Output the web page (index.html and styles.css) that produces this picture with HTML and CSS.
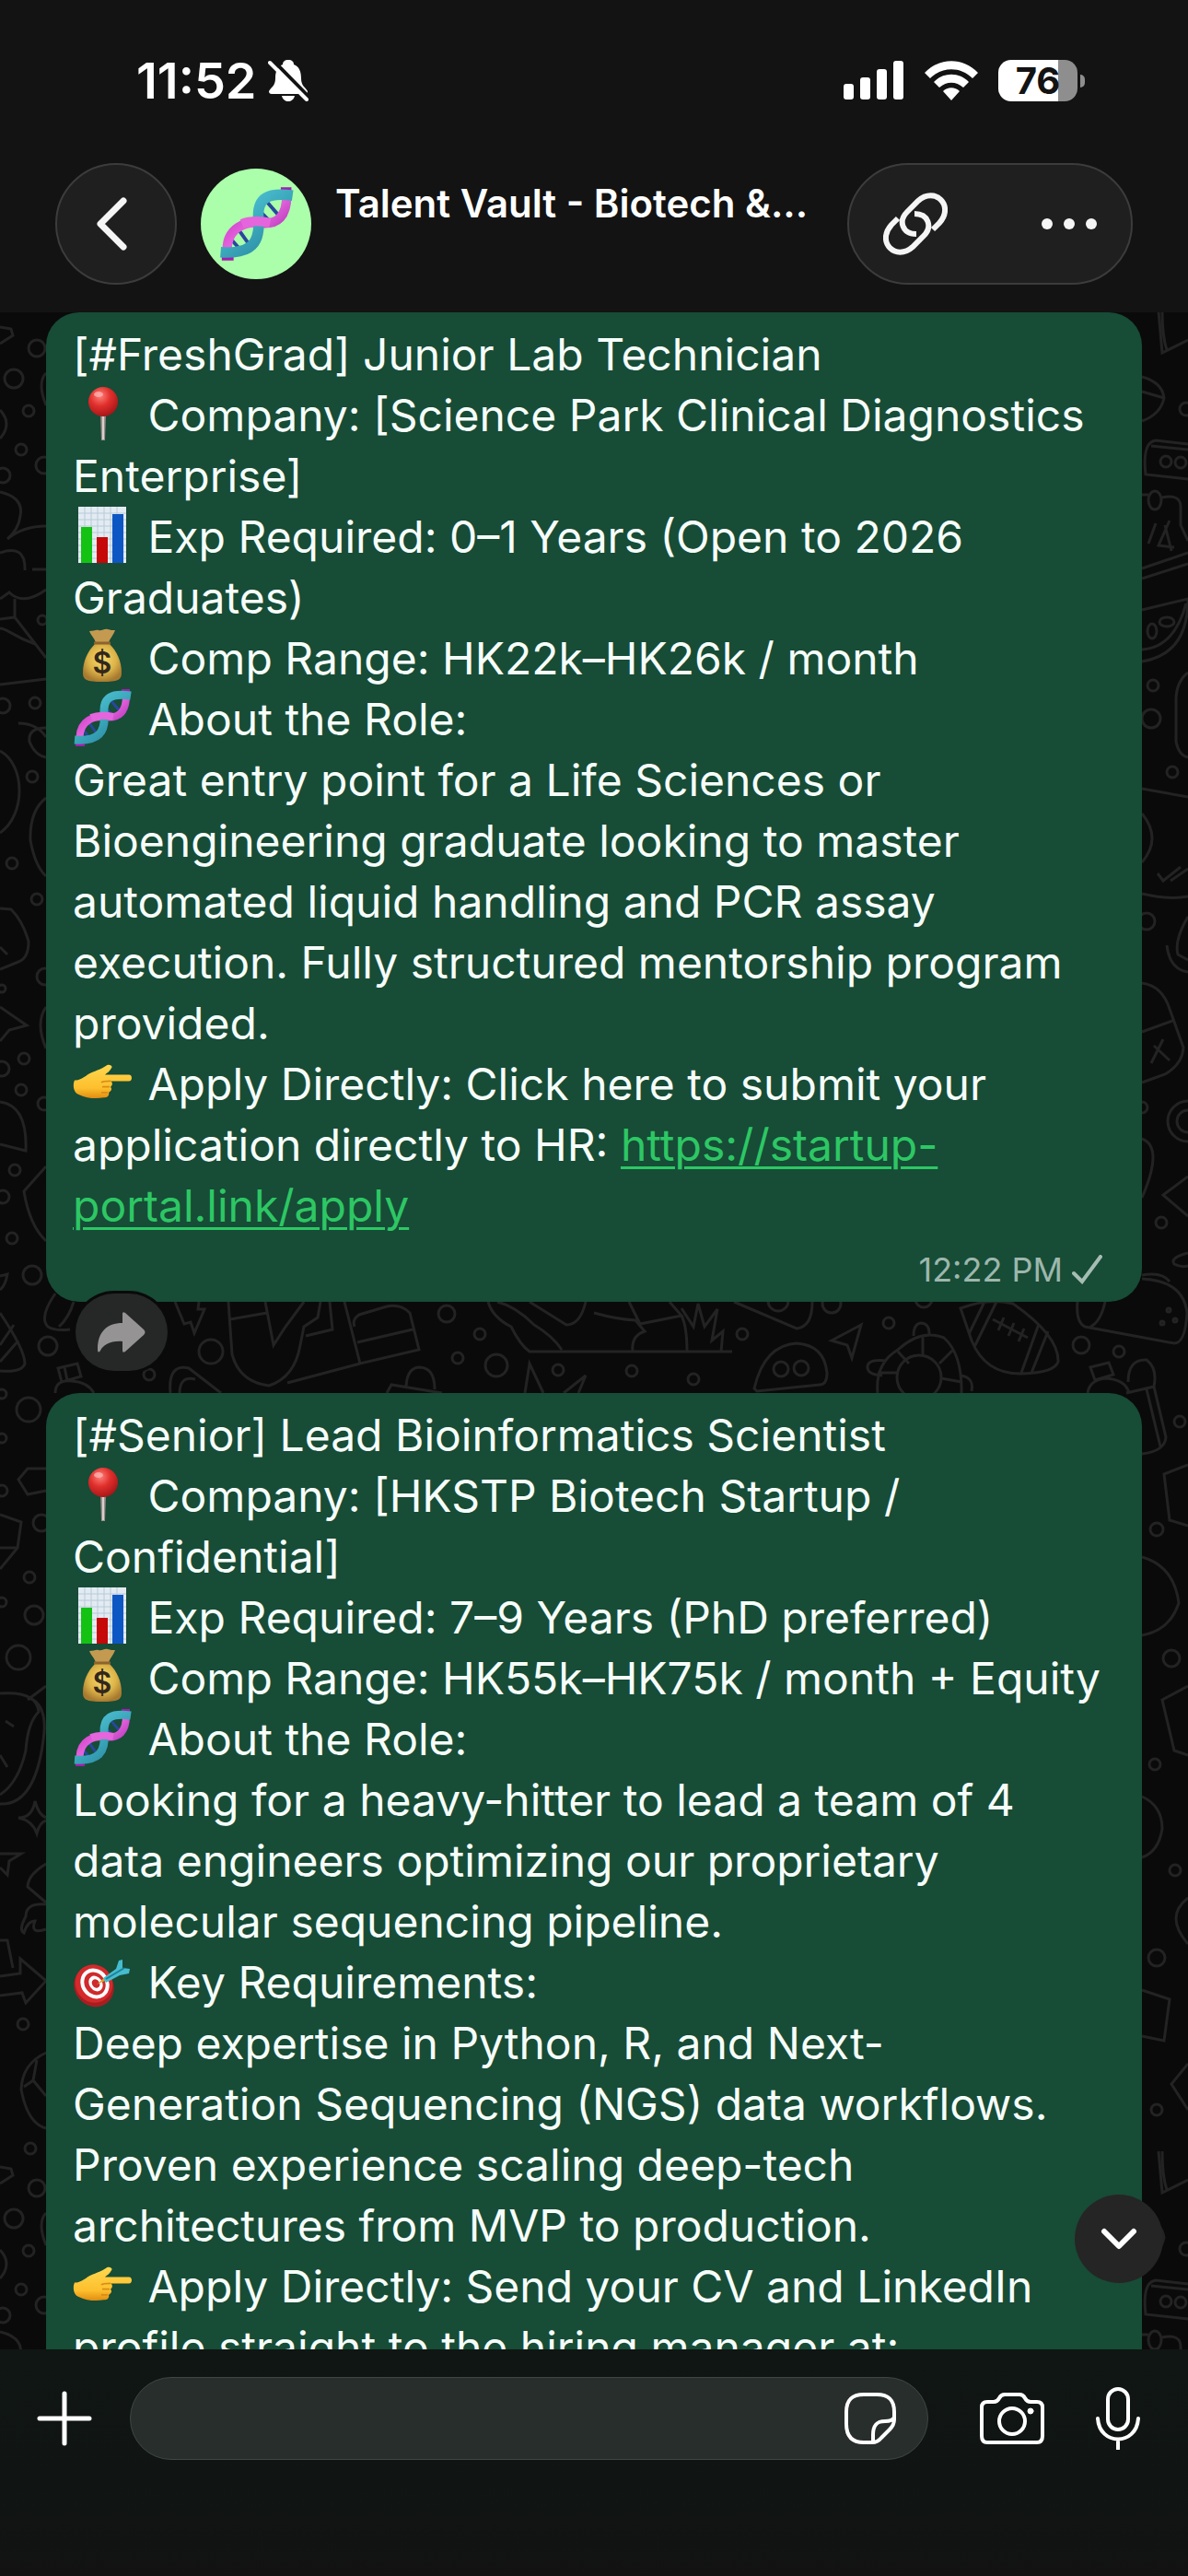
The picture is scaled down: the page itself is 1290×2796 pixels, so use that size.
FILE: index.html
```html
<!DOCTYPE html>
<html lang="en">
  <head>
    <meta charset="UTF-8" />
    <meta name="viewport" content="width=device-width, initial-scale=1.0" />
    <title>Talent Vault - Biotech</title>
    <link rel="stylesheet" href="styles.css">
  </head>
  <body>
    <!-- shared emoji drawings -->
    <svg width="0" height="0" class="defs" aria-hidden="true">
      <defs>
        <linearGradient id="teal" x1="0" y1="0" x2="1" y2="1">
          <stop offset="0" stop-color="#55d0de" />
          <stop offset="1" stop-color="#237f98" />
        </linearGradient>
        <linearGradient id="pink" x1="0" y1="0" x2="1" y2="1">
          <stop offset="0" stop-color="#c21ec0" />
          <stop offset="0.5" stop-color="#e565dc" />
          <stop offset="1" stop-color="#9a1ba8" />
        </linearGradient>
        <radialGradient id="red" cx="0.4" cy="0.3" r="0.7">
          <stop offset="0" stop-color="#ff8078" />
          <stop offset="0.5" stop-color="#e02f2c" />
          <stop offset="1" stop-color="#a91718" />
        </radialGradient>
        <radialGradient id="gold" cx="0.5" cy="0.4" r="0.6">
          <stop offset="0" stop-color="#f7dc6c" />
          <stop offset="0.6" stop-color="#dcb348" />
          <stop offset="1" stop-color="#a87a30" />
        </radialGradient>
        <linearGradient id="skin" x1="0" y1="0" x2="0" y2="1">
          <stop offset="0" stop-color="#ffd84f" />
          <stop offset="0.7" stop-color="#fdbf2d" />
          <stop offset="1" stop-color="#e08c10" />
        </linearGradient>
        <symbol id="dna" viewBox="0 0 64 64">
          <path d="M36 22l10 10M41 13l13 15M10 44l8 9M18 38l10 14" stroke="#28479c" stroke-width="3" />
          <path d="M34 20l9 14M56 14l-5 12M10 50l2-6M26 50l4-8" stroke="#a025ad" stroke-width="2" />
          <path d="M53 1h9v7h-9zM3 58h10v5H3z" fill="#a51daf" />
          <path d="M58 8C58 26 50 32 38 31.500C22 29 8 36 7.500 53" fill="none" stroke="url(#pink)" stroke-width="8" />
          <path d="M63 8C42 5 33 10 34 27C36 48 28 58 2 56" fill="none" stroke="url(#teal)" stroke-width="9" />
          <path d="M20 32c7-3 14-3 24-1" fill="none" stroke="#e565dc" stroke-width="8" />
        </symbol>
        <symbol id="pin" viewBox="0 0 64 64">
          <path d="M30 31h6l-1 30h-4z" fill="#9b8f8d" />
          <path d="M32 31h2v29h-2z" fill="#d9cfcc" />
          <circle cx="33" cy="19" r="16" fill="url(#red)" />
          <ellipse cx="28" cy="11" rx="5" ry="3" fill="#fbb" opacity="0.7" />
        </symbol>
        <symbol id="chart" viewBox="0 0 64 64">
          <path d="M6 1h52v61H6z" fill="#e3ebf2" />
          <path d="M6 8h52M6 15h52M6 22h52M6 29h52M6 36h52M6 43h52M6 50h52M6 57h52M13 1v61M20 1v61M27 1v61M34 1v61M41 1v61M48 1v61" stroke="#b7cad9" stroke-width="1" />
          <path d="M9 23h12v39H9z" fill="#14c214" />
          <path d="M26 34h12v28H26z" fill="#c60808" />
          <path d="M43 9h12v53H43z" fill="#0d57c4" />
        </symbol>
        <symbol id="money" viewBox="0 0 64 64">
          <path d="M18 4c5 0 7-2 10-1 4 1 6-2 10-1 3 1 5 1 8 1-2 6-6 9-7 14H25c-1-5-5-8-7-13z" fill="#c49a50" />
          <path d="M24 18h16c8 8 13 19 13 31 0 8-4 10-21 10s-21-2-21-10c0-12 5-23 13-31z" fill="url(#gold)" />
          <path d="M23 17h18" stroke="#8c632b" stroke-width="3" />
          <text x="32" y="50" text-anchor="middle" class="dollar">$</text>
        </symbol>
        <symbol id="hand" viewBox="0 0 64 64">
          <g transform="translate(0 7) scale(1 0.78)">
            <path d="M2 29c5 0 10-4 14-8 7-5 15-7 21-13 3-2 7 1 5 4-2 5-5 7-7 9h26c4 0 4 9 0 9H41c3 2 2 6 0 8 2 3 1 6-2 8 1 3-1 7-5 7-9 2-19 1-27-4-7-3-7-15-5-20z" fill="url(#skin)" />
            <path d="M41 30c-4 0-8 0-10 2M40 38h-8M38 46h-7" fill="none" stroke="#d98d14" stroke-width="2" />
          </g>
        </symbol>
        <symbol id="target" viewBox="0 0 64 64">
          <g transform="translate(0 4)">
            <ellipse cx="23" cy="34" rx="21" ry="23" transform="rotate(-35 23 34)" fill="#a81e20" />
            <ellipse cx="23" cy="31" rx="20" ry="21" transform="rotate(-35 23 31)" fill="#d5292b" />
            <ellipse cx="24" cy="31" rx="15" ry="17" transform="rotate(-35 24 31)" fill="#fff" />
            <ellipse cx="24" cy="31" rx="11" ry="13" transform="rotate(-35 24 31)" fill="#cf2a2c" />
            <ellipse cx="25" cy="31" rx="7" ry="9" transform="rotate(-35 25 31)" fill="#fff" />
            <ellipse cx="25" cy="31" rx="4" ry="5" transform="rotate(-35 25 31)" fill="#cf2a2c" />
            <path d="M26 32l9-8 2 3z" fill="#d9a62b" />
            <path d="M33 25l14-10 3-9 4-1v9l8 1-1 5-10 2-15 8z" fill="#45bcd0" />
            <path d="M36 26l20-12" stroke="#1f7f95" stroke-width="2" />
          </g>
        </symbol>
      </defs>
    </svg>

    <header class="header">
      <div class="status">
        <div class="status-left">
          <span class="clock">11:52</span>
          <svg class="bell" viewBox="0 0 44 46">
            <path d="M22 1c-4 0-6 2-6 5-6 2-8 8-8 15 0 8-4 9-7 14 0 2 1 3 3 3h36c2 0 3-1 3-3-3-5-7-6-7-14 0-7-2-13-8-15 0-3-2-5-6-5zM15 40h14c-1 4-4 6-7 6s-6-2-7-6z" fill="#fff" />
            <path d="M5 1l41 42" stroke="#131313" stroke-width="4" />
            <path d="M2 4l40 40" stroke="#fff" stroke-width="4" stroke-linecap="round" />
          </svg>
        </div>
        <div class="status-right">
          <svg class="signal" viewBox="0 0 66 42">
            <rect x="0" y="25" width="11" height="17" rx="3" />
            <rect x="18" y="18" width="11" height="24" rx="3" />
            <rect x="36" y="9" width="11" height="33" rx="3" />
            <rect x="54" y="0" width="11" height="42" rx="3" />
          </svg>
          <svg class="wifi" viewBox="0 0 58 43">
            <path d="M0 13C16-4 42-4 58 13L52 19C39 6 19 6 6 19zM10 23C20 12 38 12 48 23L42 29C34 22 24 22 16 29zM20 33C25 28 33 28 38 33L29 43z" />
          </svg>
          <div class="battery"><span>76</span></div>
        </div>
      </div>

      <div class="topbar">
        <button class="glass back" aria-label="Back">
          <svg viewBox="0 0 34 58"><path d="M30 4L5 29l25 25" /></svg>
        </button>
        <div class="avatar"><svg><use href="#dna" /></svg></div>
        <h1>Talent Vault - Biotech &amp;...</h1>
        <div class="glass actions">
          <button aria-label="Copy link">
            <svg class="link-icon" viewBox="0 0 70 70">
              <path d="M16 29L9 36C-8 55 14 76 32 60L44 48C54 38 49 24 34 24" />
              <path d="M54 41L61 34C78 15 56-6 38 10L26 22C16 32 21 46 36 46" />
            </svg>
          </button>
          <button aria-label="More">
            <svg class="dots" viewBox="0 0 60 14">
              <circle cx="6" cy="7" r="6" /><circle cx="30" cy="7" r="6" /><circle cx="54" cy="7" r="6" />
            </svg>
          </button>
        </div>
      </div>
    </header>

    <main class="chat">
      <!-- doodle wallpaper -->
      <svg class="wallpaper" viewBox="0 339 1290 2211" preserveAspectRatio="xMidYMin slice" aria-hidden="true">
        <defs>
          <g id="edges">
            <path d="M0 445Q14 460 0 476M0 534Q26 540 22 560Q20 575 8 585Q25 571 50 571M0 600Q28 590 27 619M35 618H50M0 650L10 643Q25 658 50 640M16 650V670L50 714M0 672L16 670M0 682C8 682 12 690 38 699M0 743L50 737M20 785Q40 785 50 800M50 790Q30 790 32 805Q38 820 50 822M0 815C28 830 28 885 0 904M50 866Q32 880 33 912Q38 940 50 951M0 986L12 987Q25 1000 31 1022Q31 1040 20 1044L0 1052M0 1028L8 1036M0 1093L29 1113L10 1118L0 1130M50 1093Q38 1110 50 1138M0 1196Q30 1200 28 1249L0 1242M50 1266L26 1293Q32 1330 50 1347M0 355L12 357L14 364L0 373M50 405Q40 415 50 440" />
            <path d="M1258 338L1262 383L1290 369M1262 338Q1262 365 1267 380M1240 409Q1262 415 1264 432Q1260 450 1240 457M1240 425L1264 432M1290 520L1244 515Q1240 480 1255 478L1290 482M1250 484L1290 488M1240 537H1247M1262 540Q1282 536 1282 550V570L1290 587M1247 590L1255 568M1270 565L1258 592L1275 594M1265 570L1272 598M1240 617L1290 600M1240 628L1290 612M1240 662L1290 650Q1290 710 1240 718M1240 705Q1275 703 1288 655" />
            <ellipse cx="1254" cy="543" rx="7" ry="10" /><ellipse cx="1251" cy="685" rx="5" ry="8" /><ellipse cx="1267" cy="675" rx="8" ry="5" />
            <circle cx="40" cy="378" r="9" /><circle cx="15" cy="411" r="10" /><circle cx="31" cy="446" r="6" /><circle cx="23" cy="488" r="6" /><circle cx="3" cy="516" r="8" /><circle cx="48" cy="505" r="9" /><circle cx="1266" cy="501" r="6" /><circle cx="1282" cy="502" r="6" /><circle cx="1288" cy="444" r="7" />
          </g>
        </defs>
        <use href="#edges" />
        <use href="#edges" y="1997" />
        <circle cx="3" cy="766" r="8" /><circle cx="38" cy="763" r="6" /><circle cx="35" cy="843" r="6" /><circle cx="46" cy="673" r="5" /><circle cx="13" cy="937" r="6" /><circle cx="40" cy="976" r="6" /><circle cx="49" cy="1060" r="9" /><circle cx="2" cy="1073" r="4" /><circle cx="2" cy="1160" r="8" /><circle cx="26" cy="1149" r="6" /><circle cx="23" cy="1183" r="6" /><circle cx="48" cy="1198" r="7" /><circle cx="16" cy="1270" r="6" /><circle cx="3" cy="1299" r="7" /><circle cx="13" cy="1344" r="6" /><circle cx="35" cy="1384" r="10" />
        <circle cx="1252" cy="744" r="6" /><circle cx="1250" cy="780" r="10" /><circle cx="1273" cy="838" r="6" /><circle cx="1245" cy="1000" r="9" /><circle cx="1290" cy="1217" r="22" /><circle cx="1290" cy="1217" r="12" /><circle cx="1240" cy="1202" r="6" /><circle cx="1261" cy="1327" r="6" />
        <path d="M1290 730Q1277 740 1277 760V805Q1280 820 1290 822M1240 856L1290 865M1240 883Q1262 910 1240 936M1257 948L1263 956L1282 941M1271 956L1290 943M1240 970Q1270 977 1290 973M1267 1026Q1270 1052 1290 1055M1290 995Q1275 1020 1279 1036L1290 1042M1240 1067Q1262 1070 1270 1095L1285 1137Q1284 1155 1265 1166L1240 1175M1240 1120L1273 1108M1250 1154L1263 1128M1253 1135L1270 1151M1240 1236Q1264 1245 1240 1300M1290 1277L1263 1297L1290 1320M1290 1360Q1270 1365 1275 1372Q1282 1376 1290 1374M1240 1384Q1262 1380 1270 1391" />

        <path d="M0 1425Q27 1465 27 1480Q24 1490 0 1488M0 1460L15 1438M0 1478L20 1455M0 1385L8 1383Q6 1395 0 1400M60 1404Q42 1430 52 1440Q60 1445 76 1443M80 1413Q75 1430 64 1440M63 1485L84 1480L88 1494L67 1500ZM70 1484L73 1498M60 1512Q60 1497 78 1499Q95 1500 102 1512M190 1413L200 1437L207 1435L211 1447L222 1421L215 1421L216 1413M185 1512Q182 1480 205 1485L240 1512M195 1512Q195 1493 212 1497" />
        <path d="M248 1413L252 1470Q260 1500 292 1504Q320 1495 326 1460L330 1440L345 1430L348 1413M250 1432L290 1425M288 1413L297 1460L310 1440L330 1413M332 1450L361 1443L358 1413M374 1413L391 1480L455 1465L445 1425Q435 1415 420 1418L390 1427Q382 1432 385 1440M388 1457L448 1443M391 1480L312 1501M420 1512L425 1503L480 1512M441 1505Q442 1484 456 1484Q472 1485 472 1508" />
        <path d="M530 1413Q535 1430 555 1440Q565 1460 575 1467H795M540 1413Q560 1418 580 1438Q600 1450 610 1465M575 1413L615 1438Q630 1438 636 1413M570 1512L575 1480L590 1512M612 1512L636 1493L628 1512M645 1425Q670 1432 690 1433L700 1445Q685 1450 687 1467M683 1413L695 1437L740 1428L727 1413M740 1428Q746 1440 746 1467M740 1420L753 1440L758 1415L765 1440L779 1421L773 1455L785 1445L783 1467" />
        <path d="M797 1413L865 1442Q882 1440 882 1413M935 1438L903 1455L920 1460L925 1474ZM819 1507Q830 1460 865 1458Q895 1460 898 1490Q898 1503 890 1503L822 1510ZM953 1512Q950 1480 975 1465Q1000 1442 1025 1452Q1045 1470 1044 1512M992 1450Q992 1436 1001 1436Q1010 1437 1009 1450M958 1493Q941 1492 942 1483Q943 1475 962 1477M1043 1493Q1058 1495 1055 1510M1002 1450V1471M975 1467L987 1480M1034 1466L1020 1480M953 1490H974M1022 1496L1044 1500" />
        <path d="M1043 1420Q1075 1408 1100 1415Q1150 1450 1149 1478Q1145 1490 1110 1491Q1070 1492 1055 1455ZM1069 1413L1052 1448M1082 1413L1058 1462M1128 1437L1109 1490M1138 1445L1120 1490M1078 1432L1116 1452M1090 1430L1084 1444M1101 1436L1095 1450M1112 1442L1106 1456M1170 1413Q1168 1435 1178 1440L1275 1458Q1287 1458 1289 1425Q1285 1390 1240 1388M1200 1413Q1195 1435 1184 1440M1184 1484L1204 1479L1209 1492L1189 1498ZM1181 1512Q1183 1498 1200 1496Q1222 1497 1226 1512M1225 1500Q1225 1475 1245 1476Q1257 1485 1253 1505L1266 1560Q1265 1575 1240 1578M1223 1512L1253 1505M1245 1508L1260 1570" />
        <circle cx="52" cy="1461" r="10" /><circle cx="162" cy="1492" r="6" /><circle cx="229" cy="1467" r="13" /><circle cx="485" cy="1426" r="9" /><circle cx="521" cy="1448" r="6" /><circle cx="497" cy="1474" r="6" /><circle cx="539" cy="1482" r="12" /><circle cx="606" cy="1487" r="6" /><circle cx="806" cy="1448" r="6" /><circle cx="686" cy="1488" r="6" /><circle cx="753" cy="1497" r="6" /><circle cx="845" cy="1412" r="11" /><circle cx="903" cy="1415" r="10" /><circle cx="1003" cy="1410" r="9" /><circle cx="965" cy="1436" r="6" /><circle cx="848" cy="1486" r="8" /><circle cx="870" cy="1485" r="8" /><circle cx="998" cy="1495" r="24" /><circle cx="1174" cy="1460" r="9" /><circle cx="1215" cy="1467" r="6" /><circle cx="1269" cy="1422" r="2" /><circle cx="1276" cy="1433" r="2" /><circle cx="1262" cy="1436" r="2" />

        <path d="M50 1594H30L20 1606L30 1622L50 1618M0 1644L23 1652L19 1680L0 1703M0 1680H19M0 1838Q40 1835 42 1858Q30 1870 28 1900Q20 1935 0 1948M32 1843Q50 1850 48 1880Q40 1960 0 1958M50 1830L30 1845M20 1973Q35 1973 38 1955Q42 1970 50 1973M20 1973Q35 1976 40 1990Q43 1978 50 1976M6 1868L15 1874M0 1905L8 1918M0 2012H23L10 2020L8 2035L0 2027M50 2023Q30 2035 30 2048L50 2065M50 2067Q28 2065 28 2080Q20 2095 26 2098Q30 2085 38 2085Q32 2100 50 2094M0 2106H8L14 2136M0 2145L22 2142V2126L50 2150L28 2174L24 2163L0 2166M50 2228Q24 2240 23 2268Q30 2305 50 2310M40 2236L36 2258L26 2265M36 2258L50 2275" />
        <circle cx="31" cy="1530" r="13" /><circle cx="2" cy="1513" r="5" /><circle cx="2" cy="1561" r="5" /><circle cx="2" cy="1618" r="6" /><circle cx="45" cy="1653" r="9" /><circle cx="32" cy="1712" r="6" /><circle cx="2" cy="1739" r="5" /><circle cx="37" cy="1753" r="10" /><circle cx="20" cy="1799" r="13" /><circle cx="25" cy="2197" r="6" /><circle cx="33" cy="2332" r="6" />
        <path d="M1290 1590L1264 1600L1270 1650L1290 1656M1240 1690Q1275 1700 1280 1740Q1270 1770 1240 1775M1290 1830L1262 1845L1275 1900L1290 1905M1240 1950Q1262 1960 1262 1985Q1258 2010 1240 2016M1290 2060Q1264 2080 1290 2110M1240 2160L1270 2170L1264 2215L1240 2210M1290 2240L1272 2262L1290 2290" />
        <circle cx="1281" cy="1543" r="6" /><circle cx="1256" cy="1660" r="7" /><circle cx="1272" cy="1800" r="9" /><circle cx="1254" cy="1915" r="6" /><circle cx="1276" cy="2030" r="6" /><circle cx="1256" cy="2125" r="9" /><circle cx="1256" cy="2290" r="6" />
      </svg>

      <div class="messages">
        <article class="bubble">
          <p>[#FreshGrad] Junior Lab Technician</p>
          <p><svg class="emoji"><use href="#pin" /></svg> Company: [Science Park Clinical Diagnostics Enterprise]</p>
          <p><svg class="emoji"><use href="#chart" /></svg> Exp Required: 0–1 Years (Open to 2026 Graduates)</p>
          <p><svg class="emoji"><use href="#money" /></svg> Comp Range: HK22k–HK26k / month</p>
          <p><svg class="emoji"><use href="#dna" /></svg> About the Role:</p>
          <p>Great entry point for a Life Sciences or Bioengineering graduate looking to master automated liquid handling and PCR assay execution. Fully structured mentorship program provided.</p>
          <p><svg class="emoji"><use href="#hand" /></svg> Apply Directly: Click here to submit your application directly to HR: <a href="https://startup-portal.link/apply">https://startup-<wbr>portal.link/apply</a></p>
          <div class="meta">
            <time>12:22 PM</time>
            <svg viewBox="0 0 34 32"><path d="M2 20l9 9L31 2" /></svg>
          </div>
        </article>

        <button class="share" aria-label="Forward">
          <svg viewBox="0 0 52 44"><path d="M27 2Q27-1 30 1L50 19Q53 22 50 25L30 43Q27 45 27 42V32C14 31 6 36 3 42Q0 46 0 40C0 22 10 12 27 12Z" /></svg>
        </button>

        <article class="bubble">
          <p>[#Senior] Lead Bioinformatics Scientist</p>
          <p><svg class="emoji"><use href="#pin" /></svg> Company: [HKSTP Biotech Startup / Confidential]</p>
          <p><svg class="emoji"><use href="#chart" /></svg> Exp Required: 7–9 Years (PhD preferred)</p>
          <p><svg class="emoji"><use href="#money" /></svg> Comp Range: HK55k–HK75k / month + Equity</p>
          <p><svg class="emoji"><use href="#dna" /></svg> About the Role:</p>
          <p>Looking for a heavy-hitter to lead a team of 4 data engineers optimizing our proprietary molecular sequencing pipeline.</p>
          <p><svg class="emoji"><use href="#target" /></svg> Key Requirements:</p>
          <p>Deep expertise in Python, R, and Next-Generation Sequencing (NGS) data workflows.</p>
          <p>Proven experience scaling deep-tech architectures from MVP to production.</p>
          <p><svg class="emoji"><use href="#hand" /></svg> Apply Directly: Send your CV and LinkedIn profile straight to the hiring manager at:</p>
        </article>
      </div>

      <button class="scroll-down" aria-label="Scroll to latest">
        <svg viewBox="0 0 40 24"><path d="M4 4l16 16L36 4" /></svg>
      </button>
    </main>

    <footer class="composer">
      <button aria-label="Attach">
        <svg class="plus" viewBox="0 0 60 60"><path d="M30 3v54M3 30h54" /></svg>
      </button>
      <div class="field">
        <input type="text" aria-label="Message" />
        <button aria-label="Stickers">
          <svg class="sticker" viewBox="0 0 56 56">
            <path d="M30 54H21C8 54 2 47 2 34V21C2 8 8 2 21 2H35C48 2 54 8 54 21V29Q54 35 49 40L40 49Q36 54 30 54ZM31 54V46C31 34 36 31 44 31Q52 31 54 27" />
          </svg>
        </button>
      </div>
      <button aria-label="Camera">
        <svg class="camera" viewBox="0 0 70 56">
          <path d="M8 10H15Q19 10 21 6Q23 2 27 2H43Q47 2 49 6Q51 10 55 10H62Q68 10 68 16V47Q68 54 62 54H8Q2 54 2 47V16Q2 10 8 10Z" />
          <circle cx="35" cy="31" r="14" />
          <circle class="dot" cx="55" cy="20" r="3" />
        </svg>
      </button>
      <button aria-label="Voice message">
        <svg class="mic" viewBox="0 0 48 68">
          <rect x="13" y="2" width="22" height="44" rx="11" />
          <path d="M2 34C4 64 44 64 46 34M24 57V67" />
        </svg>
      </button>
    </footer>
  </body>
</html>
```

FILE: styles.css
```css
* {
  box-sizing: border-box;
}
body {
  margin: 0;
  height: 100vh;
  display: flex;
  flex-direction: column;
  overflow: hidden;
  background: #0a0a0a;
  color: #fff;
  font-family: Inter, "Noto Sans", sans-serif;
}
button {
  padding: 0;
  border: none;
  background: none;
  color: inherit;
  cursor: pointer;
  display: flex;
  align-items: center;
  justify-content: center;
}
svg {
  display: block;
  flex: none;
}
p {
  margin: 0;
}
.defs {
  position: absolute;
}

/* header */
.header {
  padding: 54px 60px 30px;
  background: #131313;
}
.status {
  display: flex;
  justify-content: space-between;
  align-items: center;
  height: 66px;
  padding: 0 53px 0 88px;
}
.status-left,
.status-right {
  display: flex;
  align-items: center;
}
.status-left {
  gap: 12px;
}
.status-right {
  gap: 22px;
  fill: #fff;
}
.clock {
  font-size: 54px;
  font-weight: 600;
}
.bell {
  width: 44px;
  height: 46px;
}
.signal {
  width: 66px;
  height: 42px;
}
.wifi {
  width: 58px;
  height: 43px;
}
.battery {
  position: relative;
  width: 86px;
  height: 45px;
  margin-right: 7px;
  border-radius: 14px;
  background: linear-gradient(90deg, #fff 76%, #8e8e8e 76%);
  color: #131313;
  font-size: 40px;
  font-weight: 700;
  line-height: 45px;
  text-align: center;
}
.battery::after {
  content: "";
  position: absolute;
  right: -8px;
  top: 16px;
  width: 5px;
  height: 14px;
  border-radius: 0 5px 5px 0;
  background: #8e8e8e;
}
.topbar {
  display: flex;
  align-items: center;
  margin-top: 57px;
}
.glass {
  height: 132px;
  border: 2px solid #3c3c3c;
  border-radius: 66px;
  background: #1f1f1f;
}
.back {
  width: 132px;
}
.back svg {
  width: 34px;
  height: 58px;
  margin-right: 10px;
  fill: none;
  stroke: #f5f5f5;
  stroke-width: 7;
  stroke-linecap: round;
  stroke-linejoin: round;
}
.avatar {
  display: flex;
  align-items: center;
  justify-content: center;
  width: 120px;
  height: 120px;
  margin-left: 26px;
  border-radius: 50%;
  background: #abffab;
}
.avatar svg {
  width: 82px;
  height: 82px;
}
h1 {
  flex: 1;
  min-width: 0;
  margin: 0 0 44px 26px;
  font-size: 42px;
  font-weight: 600;
  line-height: 54px;
  white-space: nowrap;
}
.actions {
  display: flex;
  justify-content: space-between;
  align-items: center;
  width: 310px;
  padding: 0 37px;
}
.link-icon {
  width: 70px;
  height: 70px;
  fill: none;
  stroke: #f5f5f5;
  stroke-width: 6;
}
.dots {
  width: 60px;
  height: 14px;
  fill: #f5f5f5;
}

/* chat */
.chat {
  position: relative;
  flex: 1;
  min-height: 0;
  overflow: hidden;
}
.wallpaper {
  position: absolute;
  inset: 0;
  width: 100%;
  height: 100%;
  fill: none;
  stroke: #232323;
  stroke-width: 3;
}
.messages {
  position: relative;
  padding: 0 50px;
}
.bubble {
  padding: 13px 36px 11px 29px;
  border-radius: 36px;
  background: #174c37;
  color: #f6fdf9;
  font-size: 48px;
  line-height: 66px;
}
.bubble a {
  color: #2dc764;
  text-decoration-thickness: 3px;
  text-underline-offset: 6px;
}
.emoji {
  display: inline-block;
  width: 64px;
  height: 64px;
  margin-top: -10px;
  margin-right: 4px;
  vertical-align: -13px;
}
.dollar {
  font-family: Inter, sans-serif;
  font-size: 32px;
  font-weight: 600;
  fill: #33271c;
}
.meta {
  display: flex;
  justify-content: flex-end;
  align-items: center;
  gap: 10px;
  height: 60px;
  padding: 12px 6px 0 0;
  color: #9db7ac;
  font-size: 36px;
  line-height: 48px;
}
.meta svg {
  width: 34px;
  height: 32px;
  fill: none;
  stroke: #a5bdb3;
  stroke-width: 4;
  stroke-linecap: round;
}
.share {
  width: 100px;
  height: 84px;
  margin: -9px 0 24px 32px;
  border-radius: 42px;
  background: #252827;
  box-shadow: 0 0 0 3px #0a0a0a;
}
.share svg {
  width: 52px;
  height: 44px;
  fill: #969395;
}
.scroll-down {
  position: absolute;
  right: 27px;
  bottom: 72px;
  width: 96px;
  height: 96px;
  border-radius: 50%;
  background: #252525;
}
.scroll-down svg {
  width: 40px;
  height: 24px;
  fill: none;
  stroke: #fff;
  stroke-width: 6;
  stroke-linecap: round;
  stroke-linejoin: round;
}

/* composer */
.composer {
  display: flex;
  align-items: center;
  padding: 30px 52px 126px 40px;
  background: linear-gradient(#101613, #101513 60%, #121212);
}
.composer svg {
  fill: none;
  stroke: #fff;
  stroke-width: 4;
  stroke-linecap: round;
  stroke-linejoin: round;
}
.composer .plus {
  width: 60px;
  height: 60px;
  stroke-width: 5;
}
.field {
  display: flex;
  align-items: center;
  flex: 1;
  min-width: 0;
  height: 90px;
  margin: 0 56px 0 41px;
  padding: 0 34px;
  border: 1px solid #3f4643;
  border-radius: 45px;
  background: #282e2b;
}
.field input {
  flex: 1;
  min-width: 0;
  border: none;
  outline: none;
  background: none;
  color: #fff;
  font: 48px Inter, sans-serif;
}
.sticker {
  width: 56px;
  height: 56px;
}
.camera {
  width: 70px;
  height: 56px;
}
.camera .dot {
  fill: #fff;
  stroke-width: 1;
}
.mic {
  width: 48px;
  height: 68px;
  margin-left: 56px;
}
```
